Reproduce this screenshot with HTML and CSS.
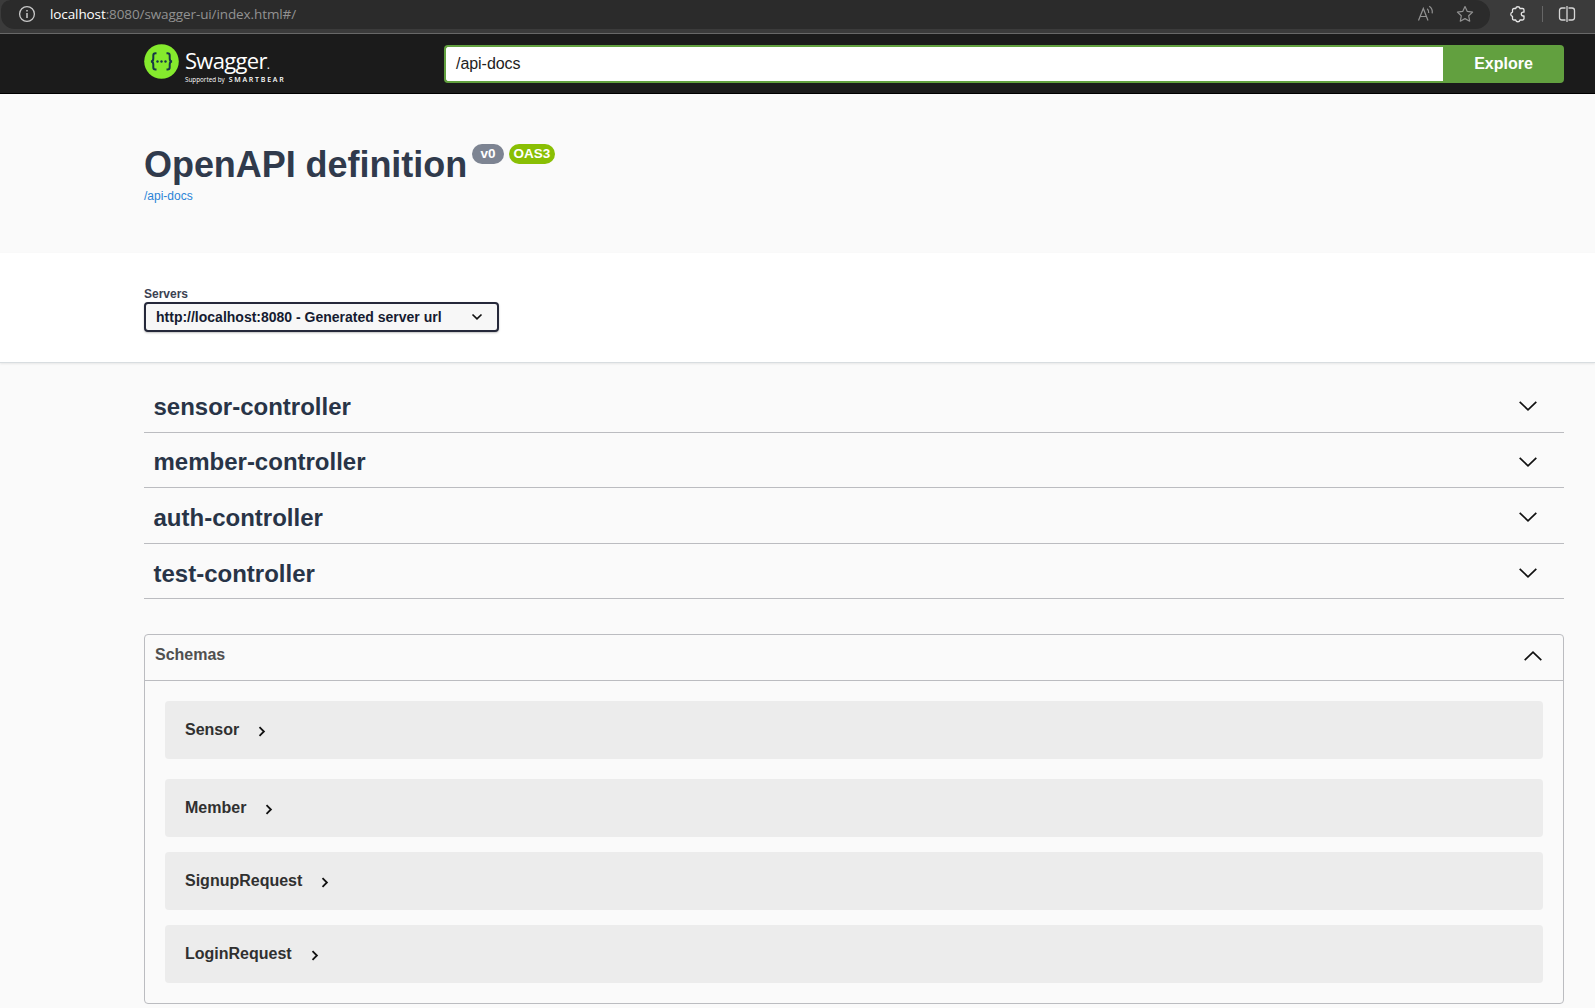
FILE: index.html
```html
<!DOCTYPE html>
<html lang="en">
<head>
<meta charset="utf-8">
<title>Swagger UI</title>
<link rel="stylesheet" href="styles.css">
</head>
<body>
<div class="browser">
  <div class="address">
    <svg class="info" width="18" height="18" viewBox="0 0 18 18" fill="none" stroke="#c9c9c9" stroke-width="1.3"><circle cx="9" cy="9" r="7.4"/><path d="M9 8v5M9 5v1.6" stroke-width="1.5"/></svg>
    <span class="url"><b>localhost</b>:8080/swagger-ui/index.html#/</span>
    <svg class="read" width="18" height="18" viewBox="0 0 18 18" fill="none" stroke="#929292" stroke-width="1.2"><path d="M1.500 15.500 6.300 3.500 11 15.500M3 11.500h6.500M10.200 3.700q1.900 1.600 1.500 4.300M12.300 1.300q3.600 2.400 2.900 7"/></svg>
    <svg class="star" width="18" height="18" viewBox="0 0 18 18" fill="none" stroke="#929292" stroke-width="1.2" stroke-linejoin="round"><path d="M9 1.500l2.300 4.900 5.300.7-3.900 3.700 1 5.400L9 13.600l-4.700 2.600 1-5.400L1.400 7.100l5.300-.7z"/></svg>
  </div>
  <svg class="puzzle" width="18" height="18" viewBox="0 0 18 18" fill="none" stroke="#e6e6e6" stroke-width="1.3" stroke-linejoin="round"><path d="M5 3.500H6.700A2.200 2.200 0 0 1 11 3.500H13.500Q15 3.500 15 5V7.200H14.200A1.900 1.900 0 0 0 14.200 11H15V13.500Q15 15 13.500 15H11A2.200 2.200 0 0 1 6.700 15H5Q3.500 15 3.500 13.500V11.400A2.200 2.200 0 0 1 3.500 7.100V5Q3.500 3.500 5 3.500Z"/></svg>
  <span class="divider"></span>
  <svg class="split" width="18" height="18" viewBox="0 0 18 18" fill="none" stroke="#d6d6d6" stroke-width="1.300"><path d="M7.500 3H4Q1.500 3 1.500 5.500V12.500Q1.500 15 4 15H7.500M10.500 3H14Q16.500 3 16.500 5.500V12.500Q16.500 15 14 15H10.500M9 1V17"/></svg>
</div>
<header class="topbar">
  <div class="logo">
    <svg width="35" height="35" viewBox="0 0 35 35"><circle cx="17.500" cy="17.500" r="17.300" fill="#85ea2d"/><g fill="none" stroke="#173647" stroke-width="2"><path d="M12.500 9.200H11.500Q9.300 9.200 9.300 11.500V14.500Q9.300 17.500 6.900 17.500Q9.300 17.500 9.300 20.500V23.300Q9.300 25.600 11.500 25.600H12.500M22.500 9.200H23.500Q25.700 9.200 25.700 11.500V14.500Q25.700 17.500 28.100 17.500Q25.700 17.500 25.700 20.500V23.300Q25.700 25.600 23.500 25.600H22.500"/></g><g fill="#173647"><circle cx="13.500" cy="17.500" r="1.200"/><circle cx="17.500" cy="17.500" r="1.200"/><circle cx="21.500" cy="17.500" r="1.200"/></g></svg>
    <div class="wordmark"><span class="name">Swagger<i>.</i></span><span class="by">Supported by <b>SMARTBEAR</b></span></div>
  </div>
  <div class="search"><div class="field">/api-docs</div><div class="explore">Explore</div></div>
</header>
<section class="info-block">
  <div class="title-row"><h1>OpenAPI definition</h1><span class="badge version">v0</span><span class="badge oas">OAS3</span></div>
  <a class="docs">/api-docs</a>
</section>
<section class="servers">
  <span class="label">Servers</span>
  <div class="select"><span>http://localhost:8080 - Generated server url</span><svg width="12" height="8" viewBox="0 0 12 8" fill="none" stroke="#111" stroke-width="1.700"><path d="M1.500 1.500 6 5.800 10.500 1.500"/></svg></div>
</section>
<main>
  <div class="tag"><h3>sensor-controller</h3><svg width="18" height="10" viewBox="0 0 18 10"><path d="M.7.8 9 8.800 17.300.8"/></svg></div>
  <div class="tag short"><h3>member-controller</h3><svg width="18" height="10" viewBox="0 0 18 10"><path d="M.7.8 9 8.800 17.300.8"/></svg></div>
  <div class="tag"><h3>auth-controller</h3><svg width="18" height="10" viewBox="0 0 18 10"><path d="M.7.8 9 8.800 17.300.8"/></svg></div>
  <div class="tag last"><h3>test-controller</h3><svg width="18" height="10" viewBox="0 0 18 10"><path d="M.7.8 9 8.800 17.300.8"/></svg></div>
  <section class="models">
    <div class="models-head"><h4>Schemas</h4><svg width="18" height="10" viewBox="0 0 18 10"><path d="M.7 9.200 9 1.200 17.300 9.200"/></svg></div>
    <div class="models-list">
      <div class="model first"><span>Sensor</span><svg width="8" height="11" viewBox="0 0 8 11"><path d="M1.500 1.200 5.900 5.500 1.500 9.800"/></svg></div>
      <div class="model"><span>Member</span><svg width="8" height="11" viewBox="0 0 8 11"><path d="M1.500 1.200 5.900 5.500 1.500 9.800"/></svg></div>
      <div class="model"><span>SignupRequest</span><svg width="8" height="11" viewBox="0 0 8 11"><path d="M1.500 1.200 5.900 5.500 1.500 9.800"/></svg></div>
      <div class="model"><span>LoginRequest</span><svg width="8" height="11" viewBox="0 0 8 11"><path d="M1.500 1.200 5.900 5.500 1.500 9.800"/></svg></div>
    </div>
  </section>
</main>
</body>
</html>
```
FILE: styles.css
```css
* { box-sizing: border-box; }
body { margin: 0; height: 1008px; overflow: hidden; background: #fafafa; font-family: "Liberation Sans", Arial, sans-serif; color: #3b4151; }
h1, h3, h4 { margin: 0; }
svg { display: block; flex: none; }

.browser { display: flex; height: 34px; padding-left: 1px; background: #3b3b3b; border-bottom: 1px solid #686868; }
.address { display: flex; width: 1489px; height: 29px; padding-left: 17px; background: #2b2b2b; border-radius: 10px 15px 15px 14px; }
.info { margin-top: 5px; }
.url { width: 1363px; margin-left: 14px; font: 13.5px/29px "Open Sans", "Noto Sans", sans-serif; letter-spacing: -.1px; color: #929292; }
.url b { font-weight: 400; color: #fff; }
.read { margin-top: 5px; margin-left: 4px; }
.star { margin-top: 5px; margin-left: 21px; }
.puzzle { margin: 5px 0 0 19px; }
.divider { width: 1px; height: 16px; margin: 6px 0 0 15px; background: #666; }
.split { margin: 5px 0 0 15px; }

.topbar { display: flex; height: 60px; padding: 10px 31px 0 144px; background: #1b1b1b; border-bottom: 1px solid #000; }
.logo { display: flex; width: 300px; gap: 6px; }
.wordmark { display: flex; flex-direction: column; color: #fff; white-space: nowrap; }
.name { height: 32px; font: 400 22px/33px "Open Sans", sans-serif; letter-spacing: -.7px; }
.name i { font-size: 12px; font-style: normal; }
.by { display: flex; gap: 4px; font: 6.3px/8px "Open Sans", sans-serif; }
.by b { font-size: 7px; font-weight: 600; letter-spacing: 1.75px; }
.search { display: flex; width: 1120px; height: 38px; margin-top: 1px; }
.field { flex: 1; padding-left: 10px; background: #fff; border: 2px solid #62a03f; border-right: 0; border-radius: 4px 0 0 4px; color: #222; font-size: 16px; line-height: 34px; letter-spacing: -.05px; }
.explore { width: 121px; background: #62a03f; border-radius: 0 4px 4px 0; color: #fff; font-weight: 700; font-size: 16px; line-height: 38px; text-align: center; }

.info-block { height: 159px; padding: 50px 0 0 144px; }
.title-row { display: flex; height: 42px; }
h1 { width: 323px; font-size: 36px; line-height: 41px; letter-spacing: -.05px; white-space: nowrap; color: #303a4c; }
.badge { height: 20px; border-radius: 10px; color: #fff; font-weight: 700; font-size: 13.500px; line-height: 20px; text-align: center; }
.version { width: 32px; margin-left: 5px; background: #7d8492; }
.oas { width: 46px; margin-left: 5px; background: #89bf04; }
.docs { display: block; margin-top: 3px; font-size: 12px; line-height: 15px; color: #2b83d6; }

.servers { display: flex; flex-direction: column; height: 110px; padding: 33px 0 0 144px; background: #fff; border-bottom: 1px solid #d8dde0; box-shadow: 0 1px 2px rgba(0,0,0,.08); }
.label { height: 16px; font-size: 12px; line-height: 17px; font-weight: 700; }
.select { display: flex; align-items: center; justify-content: space-between; width: 355px; height: 30px; padding: 0 14px 0 10px; background: #f7f7f7; border: 2px solid #25283a; border-radius: 4px; box-shadow: 0 1px 2px rgba(0,0,0,.25); color: #151b30; font-size: 14px; font-weight: 700; }

main { padding: 14px 31px 0 144px; }
.tag { display: flex; align-items: flex-start; justify-content: space-between; height: 56px; padding: 16px 27px 0 9.5px; border-bottom: 1px solid #bbbcc0; }
.tag.short { height: 55px; padding-top: 15px; }
.tag.last { height: 55px; }
h3 { font-size: 24px; line-height: 28px; color: #283447; }
.tag svg { margin-top: 7.5px; }
.tag.short svg { margin-top: 8.5px; }
.tag path, .models-head path { fill: none; stroke: #111; stroke-width: 1.700; }

.models { height: 370px; margin-top: 35px; border: 1px solid #bbbcc0; border-radius: 4px; }
.models-head { display: flex; justify-content: space-between; height: 46px; padding: 10px 21px 0 10px; border-bottom: 1px solid #bbbcc0; }
h4 { font-size: 16px; line-height: 20px; color: #505050; }
.models-head svg { margin-top: 6px; }
.models-list { display: flex; flex-direction: column; gap: 15px; padding: 20px; }
.model { display: flex; align-items: center; height: 58px; padding-left: 20px; gap: 19px; background: #ececec; border-radius: 4px; color: #303030; font-size: 16px; font-weight: 700; }
.model.first { margin-bottom: 5px; }
.model svg { margin-top: 2px; }
.model path { fill: none; stroke: #111; stroke-width: 1.800; }
```
